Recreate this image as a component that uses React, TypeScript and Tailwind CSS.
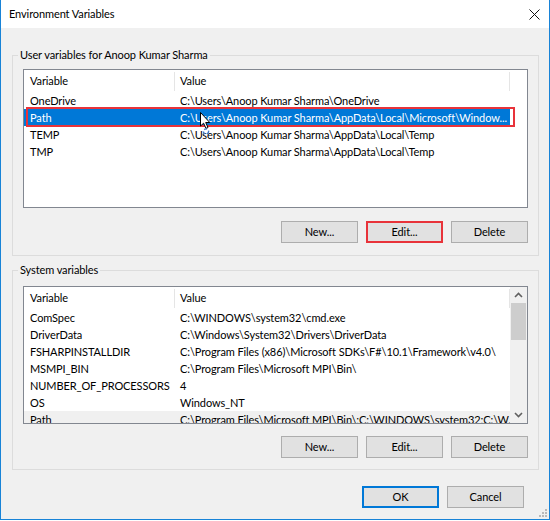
import React from "react";

type Row = [string, string];

const userVars: Row[] = [
  ["OneDrive", "C:\\Users\\Anoop Kumar Sharma\\OneDrive"],
  ["Path", "C:\\Users\\Anoop Kumar Sharma\\AppData\\Local\\Microsoft\\Window..."],
  ["TEMP", "C:\\Users\\Anoop Kumar Sharma\\AppData\\Local\\Temp"],
  ["TMP", "C:\\Users\\Anoop Kumar Sharma\\AppData\\Local\\Temp"],
];

const systemVars: Row[] = [
  ["ComSpec", "C:\\WINDOWS\\system32\\cmd.exe"],
  ["DriverData", "C:\\Windows\\System32\\Drivers\\DriverData"],
  ["FSHARPINSTALLDIR", "C:\\Program Files (x86)\\Microsoft SDKs\\F#\\10.1\\Framework\\v4.0\\"],
  ["MSMPI_BIN", "C:\\Program Files\\Microsoft MPI\\Bin\\"],
  ["NUMBER_OF_PROCESSORS", "4"],
  ["OS", "Windows_NT"],
  ["Path", "C:\\Program Files\\Microsoft MPI\\Bin\\;C:\\WINDOWS\\system32;C:\\W..."],
];

function Chevron({ down }: { down?: boolean }) {
  return (
    <svg width="9" height="6" viewBox="0 0 9 6">
      <path
        d={down ? "M1 1 L4.5 4.5 L8 1" : "M1 5 L4.5 1.5 L8 5"}
        fill="none"
        stroke="#606060"
        strokeWidth="1.6"
      />
    </svg>
  );
}

function ScrollBar() {
  return (
    <div className="flex w-[17px] flex-col bg-[#f0f0f0]">
      <div className="flex h-[16px] items-center justify-center">
        <Chevron />
      </div>
      <div className="mx-[1px] h-[37px] bg-[#cdcdcd]" />
      <div className="flex-1" />
      <div className="flex h-[16px] items-center justify-center">
        <Chevron down />
      </div>
    </div>
  );
}

function ListView({
  rows,
  selected,
  muted,
  height,
  scroll,
}: {
  rows: Row[];
  selected?: number;
  muted?: number;
  height: string;
  scroll?: boolean;
}) {
  return (
    <div className={`relative flex overflow-hidden border border-[#828790] bg-white ${height}`}>
      <div className="flex w-[486px] flex-col">
        {/* column header */}
        <div className="flex h-[22px] shrink-0 items-center">
          <div className="w-[150px] pl-[6px]">Variable</div>
          <span className="h-[19px] w-px bg-[#e5e5e5]" />
          <div className="flex-1 pl-[5px]">Value</div>
          <span className="h-[19px] w-px bg-[#e5e5e5]" />
        </div>
        {rows.map(([name, value], i) => (
          <div
            key={name + i}
            className={`flex h-[17px] shrink-0 items-center whitespace-nowrap ${
              i === selected ? "bg-[#0078d7] text-white" : i === muted ? "bg-[#f0f0f0]" : ""
            }`}
          >
            <div className="w-[150px] overflow-hidden pl-[6px]">{name}</div>
            <div className="flex-1 overflow-hidden pl-[6px]">{value}</div>
          </div>
        ))}
      </div>
      <div className="flex-1" />
      {scroll && <ScrollBar />}
      {selected !== undefined && (
        <div className="pointer-events-none absolute left-[2px] top-[37px] h-[20px] w-[489px] border-2 border-[#e8333a]" />
      )}
    </div>
  );
}

function WinButton({ label, mark, primary }: { label: string; mark?: boolean; primary?: boolean }) {
  const edge = mark
    ? "border-2 border-[#e8333a]"
    : primary
      ? "border-2 border-[#0078d7]"
      : "border border-[#adadad]";
  return (
    <button className={`flex h-[22px] w-[77px] items-center justify-center bg-[#e1e1e1] ${edge}`}>
      {label}
    </button>
  );
}

function GroupBox({
  title,
  className,
  children,
}: {
  title: string;
  className: string;
  children: React.ReactNode;
}) {
  return (
    <div className={`border border-[#dcdcdc] px-[10px] ${className}`}>
      <div className="-ml-[5px] -mt-[9px] w-fit bg-[#f0f0f0] px-[2px] leading-[16px]">{title}</div>
      {children}
    </div>
  );
}

function Cursor() {
  return (
    <svg className="absolute left-[199px] top-[112px]" width="14" height="24" viewBox="0 0 14 24">
      <path
        d="M0.5 0.5 L0.5 14 L3.6 11.2 L6 16.4 L8 15.5 L5.7 10.5 L9.8 10.5 Z"
        fill="#fff"
        stroke="#000"
        strokeWidth="1"
      />
      <circle cx="6" cy="19.5" r="2.6" fill="none" stroke="#3b78c8" strokeWidth="1.4" strokeDasharray="3 2" />
    </svg>
  );
}

function ResizeGrip() {
  const dots = [
    [6, 0],
    [3, 3],
    [6, 3],
    [0, 6],
    [3, 6],
    [6, 6],
  ];
  return (
    <svg className="absolute bottom-[2px] right-[2px]" width="8" height="8" viewBox="0 0 8 8">
      {dots.map(([x, y]) => (
        <rect key={`${x}-${y}`} x={x} y={y} width="2" height="2" fill="#b9b9b9" />
      ))}
    </svg>
  );
}

export default function App() {
  return (
    <div className="relative flex h-[520px] w-[550px] flex-col border-x border-b border-[#1883d7] bg-[#f0f0f0] font-['Lato','Noto_Sans',sans-serif] text-[11px] leading-[16px] tracking-[-0.1px] text-black">
      {/* title bar */}
      <div className="flex h-[28px] shrink-0 items-center justify-between bg-white pl-[8px] pr-[9px]">
        <span>Environment Variables</span>
        <svg width="11" height="11" viewBox="0 0 11 11">
          <path d="M0.5 0.5 L10.5 10.5 M10.5 0.5 L0.5 10.5" stroke="#111" strokeWidth="1" />
        </svg>
      </div>

      <div className="flex flex-col pl-[11px] pr-[10px]">
        <GroupBox title="User variables for Anoop Kumar Sharma" className="mt-[27px] pb-[12px]">
          <div className="mt-[6px]">
            <ListView rows={userVars} selected={1} height="h-[139px]" />
          </div>
          <div className="mt-[13px] flex justify-end gap-[8px]">
            <WinButton label="New..." />
            <WinButton label="Edit..." mark />
            <WinButton label="Delete" />
          </div>
        </GroupBox>

        <GroupBox title="System variables" className="mt-[14px] pb-[11px]">
          <div className="mt-[8px]">
            <ListView rows={systemVars} muted={6} height="h-[138px]" scroll />
          </div>
          <div className="mt-[12px] flex justify-end gap-[8px]">
            <WinButton label="New..." />
            <WinButton label="Edit..." />
            <WinButton label="Delete" />
          </div>
        </GroupBox>

        <div className="mr-[15px] mt-[16px] flex justify-end gap-[8px]">
          <WinButton label="OK" primary />
          <WinButton label="Cancel" />
        </div>
      </div>

      <Cursor />
      <ResizeGrip />
    </div>
  );
}
